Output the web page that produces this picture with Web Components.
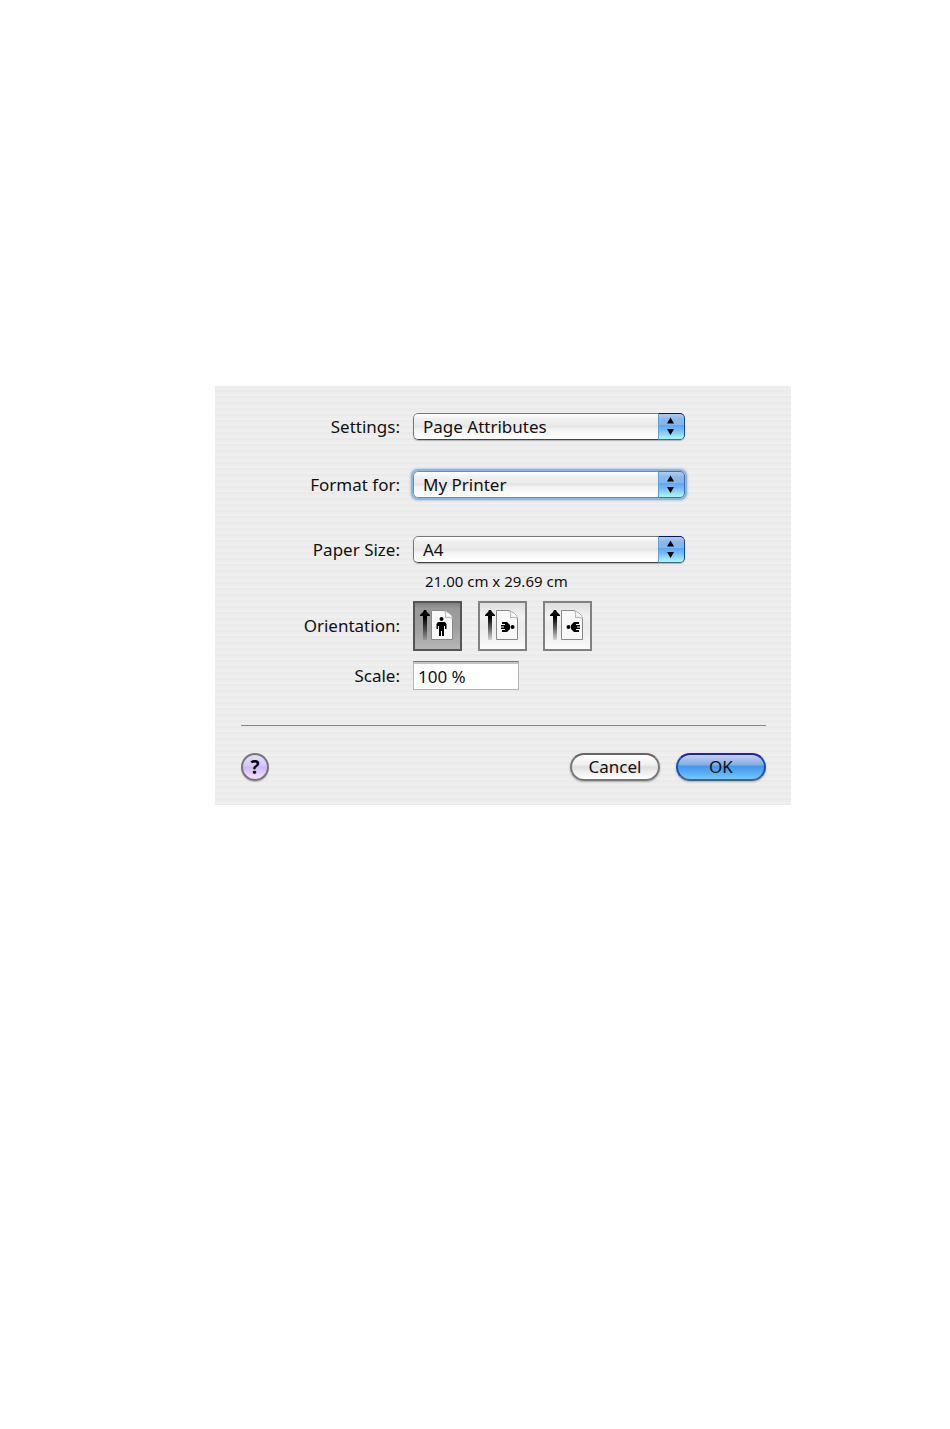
<!DOCTYPE html>
<html lang="en">
<head>
<meta charset="utf-8">
<title>Page Setup</title>
<style>
  *, *::before, *::after { box-sizing: border-box; }
  :root {
    --font-ui: "Noto Sans", "Open Sans", sans-serif;
    --label-w: 159px;
    --label-gap: 13px;
    --popup-w: 272px;
  }
  body {
    margin: 0; padding: 386px 159px 40px 215px;
    background: #fff; color: #111;
    font: 17px/26px var(--font-ui);
  }
</style>
</head>
<body>
<page-setup-sheet>
  <popup-field label="Settings:" options="Page Attributes|Summary"></popup-field>
  <popup-field label="Format for:" options="My Printer|Any Printer" active></popup-field>
  <popup-field label="Paper Size:" options="A4|US Letter|US Legal" note="21.00 cm x 29.69 cm"></popup-field>
  <orientation-field label="Orientation:"></orientation-field>
  <scale-field label="Scale:" value="100 %"></scale-field>
  <help-button slot="help"></help-button>
  <aqua-button slot="actions">Cancel</aqua-button>
  <aqua-button slot="actions" primary>OK</aqua-button>
</page-setup-sheet>

<script>
// Every field shares the same two columns: right-aligned label, then control.
const ROW_CSS = `
  *, *::before, *::after { box-sizing: border-box; }
  :host {
    display: grid; grid-template-columns: var(--label-w) minmax(0, 1fr);
    column-gap: var(--label-gap); align-items: center;
  }
  .label { text-align: right; white-space: nowrap; }
  :focus-visible { outline: 3px solid #8db4d8; }
`;

class PageSetupSheet extends HTMLElement {
  connectedCallback() {
    this.attachShadow({ mode: "open" }).innerHTML = `
      <style>
        *, *::before, *::after { box-sizing: border-box; }
        :host {
          display: block; padding: 27px 25px 24px 26px;
          background: repeating-linear-gradient(#ededed 0 2px, #efefef 2px 4px, #eaeaea 4px 6px);
        }
        form { margin: 0; }
        .fields { display: flex; flex-direction: column; }
        ::slotted(popup-field) { margin-bottom: 31px; }
        ::slotted(popup-field[active]) { margin-bottom: 38px; }
        ::slotted(popup-field[note]), ::slotted(orientation-field) { margin-bottom: 10px; }
        hr { margin: 35px 0 27px; border: 0; border-top: 1px solid #868686; }
        footer { display: flex; align-items: center; justify-content: space-between; }
        .actions { display: flex; gap: 16px; }
      </style>
      <form>
        <div class="fields"><slot></slot></div>
        <hr>
        <footer>
          <slot name="help"></slot>
          <div class="actions"><slot name="actions"></slot></div>
        </footer>
      </form>
    `;
  }
}

class PopupField extends HTMLElement {
  connectedCallback() {
    const options = this.getAttribute("options").split("|");
    const note = this.getAttribute("note");
    this.attachShadow({ mode: "open" }).innerHTML = `
      <style>
        ${ROW_CSS}
        .popup {
          display: grid; grid-template-columns: minmax(0, 1fr) 27px; height: 27px;
          max-width: var(--popup-w); border-radius: 5px; overflow: hidden;
          box-shadow: 0 1px 1px #b4b4b4;
        }
        select {
          grid-area: 1 / 1 / 2 / 3; appearance: none; width: 100%; height: 27px;
          margin: 0; padding: 0 32px 0 9px; color: #111;
          border: 1px solid #777; border-bottom-color: #444; border-radius: 5px;
          background: linear-gradient(#fff 0, #f0f0f0 20%, #eaeaea 45%, #e2e2e2 48%, #f2f2f2 60%, #fff 90%);
          font: 17px/25px var(--font-ui);
        }
        .cap {
          grid-area: 1 / 2; z-index: 1; pointer-events: none;
          border: 1px solid #1648a8; border-top-color: #0a1272; border-left-color: #5b9ee0;
          border-bottom-color: #47677c; border-radius: 0 5px 5px 0;
          background: linear-gradient(#b4cbea 0, #8bb8ea 20%, #86b6ec 42%, #5ea6f4 45%, #74bbfa 65%, #a7f0ff 95%);
        }
        .cap svg { display: block; width: 25px; height: 25px; }
        :host([active]) .popup { box-shadow: 0 0 0 2px #8fb5d8, 0 0 2px 3px #bdd0e1; }
        :host([active]) select { border-color: #5e8fbd; }
        :host([active]) .cap { border-color: #3c72b8; border-left-color: #5b9ee0; }
        .note { grid-column: 2; margin-top: 9px; padding-left: 12px; font-size: 15px; line-height: 19px; }
      </style>
      <label class="label" for="popup">${this.getAttribute("label")}</label>
      <div class="popup">
        <select id="popup">${options.map((o) => `<option>${o}</option>`).join("")}</select>
        <span class="cap"><svg viewBox="0 0 25 25" aria-hidden="true">
          <path d="M11.5 3.500 15 9.500H8zM8 15h7l-3.500 6z"/>
        </svg></span>
      </div>
      ${note ? `<div class="note">${note}</div>` : ""}
    `;
  }
}

// Little people on the page icon, one per orientation.
const UPRIGHT = `<circle cx="28.5" cy="18" r="2"/>
  <path d="M25 21h7l1.500 2v5H32v-3h-1v10h-2v-5h-1v5h-2V25h-1v3h-1.500v-5z"/>`;
const SIDEWAYS = `<circle cx="34.500" cy="26" r="2"/>
  <path d="M24 21h5l3 3v4l-3 3h-5v-2h3v-1h-4v-1.500h3v-1h-3V24h4v-1h-3z"/>`;

class OrientationField extends HTMLElement {
  connectedCallback() {
    const choices = [
      ["Portrait", UPRIGHT],
      ["Landscape", SIDEWAYS],
      ["Reverse landscape", `<g transform="translate(60 0) scale(-1 1)">${SIDEWAYS}</g>`],
    ];
    this.attachShadow({ mode: "open" }).innerHTML = `
      <style>
        ${ROW_CSS}
        .choices { display: flex; gap: 16px; }
        .choice { display: grid; width: 49px; height: 50px; }
        input, svg { grid-area: 1 / 1; width: 49px; height: 50px; margin: 0; }
        input {
          appearance: none; border: 2px solid #818181;
          background: linear-gradient(#dedede 0, #f2f2f2 30%, #eaeaea 50%, #fafafa 100%);
        }
        input:checked { border-color: #555; background: linear-gradient(#808080 0, #999 12%, #a0a0a0 55%, #b6b6b6 100%); }
        svg { pointer-events: none; z-index: 1; }
      </style>
      <span class="label" id="caption">${this.getAttribute("label")}</span>
      <div class="choices" role="radiogroup" aria-labelledby="caption">
        ${choices.map(([name, figure], i) => `
          <label class="choice">
            <input type="radio" name="orientation" aria-label="${name}" ${i === 0 ? "checked" : ""}>
            <svg viewBox="0 0 49 50" aria-hidden="true">
              <defs><linearGradient id="fade${i}" x2="0" y2="1">
                <stop offset=".25"/><stop offset="1" stop-opacity=".12"/>
              </linearGradient></defs>
              <path fill="url(#fade${i})" d="M11 9h2l1 2 1 1 2 2v1h-3v24h-4V15H7v-1l2-2 1-1z"/>
              <path fill="#f8f8f8" stroke="#888" d="M18.500 9.500h13l8 8v21h-21z"/>
              <path fill="#fff" stroke="#aaa" d="M31.500 9.500q2 3 1 7 4-1 7 1 0-3-3-5t-5-3z"/>
              ${figure}
            </svg>
          </label>`).join("")}
      </div>
    `;
  }
}

class ScaleField extends HTMLElement {
  connectedCallback() {
    this.attachShadow({ mode: "open" }).innerHTML = `
      <style>
        ${ROW_CSS}
        input {
          width: 106px; height: 29px; margin: 0; padding: 2px 4px 0; color: #111;
          border: 1px solid #b5b5b5; border-top-color: #777; border-radius: 0;
          background: #fff; box-shadow: inset 0 2px 0 #c4c4c4;
          font: 17px/24px var(--font-ui);
        }
      </style>
      <label class="label" for="scale">${this.getAttribute("label")}</label>
      <input id="scale" type="text" value="${this.getAttribute("value")}">
    `;
  }
}

class HelpButton extends HTMLElement {
  connectedCallback() {
    this.attachShadow({ mode: "open" }).innerHTML = `
      <style>
        :host { display: block; }
        button {
          box-sizing: border-box; display: block; width: 28px; height: 28px; margin: 0; padding: 0;
          border: 2px solid #777; border-radius: 50%; color: #000;
          background: linear-gradient(#e6ddfb 0, #d5c7fa 45%, #cbb6fa 50%, #f0daff 90%);
          box-shadow: 0 1px 1px #b4b4b4;
          font: 700 19px/24px var(--font-ui);
        }
      </style>
      <button type="button" title="Help">?</button>
    `;
  }
}

class AquaButton extends HTMLElement {
  connectedCallback() {
    this.attachShadow({ mode: "open" }).innerHTML = `
      <style>
        :host { display: block; }
        button {
          box-sizing: border-box; display: block; width: 90px; height: 28px; margin: 0; padding: 0;
          border: 2px solid #777; border-top-color: #666; border-radius: 14px; color: #111;
          background: linear-gradient(#fff 0, #efefef 40%, #dedede 50%, #eee 70%, #fff 100%);
          box-shadow: 0 1px 2px #aaa;
          font: 17px/24px var(--font-ui);
        }
        :host([primary]) button {
          border-color: #2424a0 #1750b4 #4a6178;
          background: linear-gradient(#c4cdee 0, #82aee2 42%, #4395e8 46%, #57a9f4 70%, #74c8ff 100%);
        }
      </style>
      <button type="button"><slot></slot></button>
    `;
  }
}

customElements.define("page-setup-sheet", PageSetupSheet);
customElements.define("popup-field", PopupField);
customElements.define("orientation-field", OrientationField);
customElements.define("scale-field", ScaleField);
customElements.define("help-button", HelpButton);
customElements.define("aqua-button", AquaButton);
</script>
</body>
</html>
